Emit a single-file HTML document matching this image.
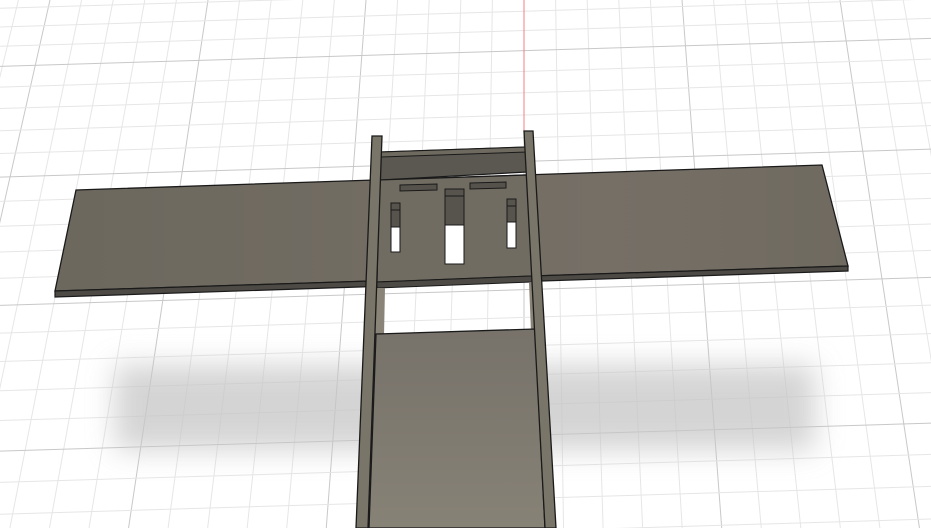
<!DOCTYPE html>
<html><head><meta charset="utf-8"><style>html,body{margin:0;padding:0;background:#fff;width:931px;height:528px;overflow:hidden}svg{display:block}</style></head>
<body>
<svg id="s" width="931" height="528" viewBox="0 0 931 528" xmlns="http://www.w3.org/2000/svg">
<defs>
<filter id="bl" x="-20%" y="-50%" width="140%" height="200%"><feGaussianBlur stdDeviation="14"/></filter>
<linearGradient id="lp" x1="0" y1="0" x2="0" y2="1"><stop offset="0" stop-color="#77726a"/><stop offset="1" stop-color="#878276"/></linearGradient>
<linearGradient id="wg" x1="0" y1="0" x2="1" y2="0"><stop offset="0" stop-color="#6c685e"/><stop offset="0.7" stop-color="#766f66"/><stop offset="1" stop-color="#6f6a60"/></linearGradient>
</defs>
<g id="grid"></g>
<line x1="524" y1="0" x2="524" y2="134" stroke="#f08080" stroke-width="1"/>
<rect x="115" y="365" width="700" height="85" fill="#c6c6c6" filter="url(#bl)" opacity="0.75"/>
<polygon points="76,190 822,165 848,266 55,291" fill="url(#wg)" stroke="#1a1a1a" stroke-width="1.3"/>
<polygon points="55,291 848,266 848,271 55,297" fill="#4d4a45" stroke="#1a1a1a" stroke-width="1.2"/>
<polygon points="380,152 527,147 527,172 380,180" fill="#5b5852" stroke="#1a1a1a" stroke-width="1.2"/>
<polygon points="380,152 527,147 527,152 380,157" fill="#6f6a60" stroke="#1a1a1a" stroke-width="1"/>
<polygon points="379,180 528,175 532,276 377,282" fill="#716c62" stroke="#1a1a1a" stroke-width="1.2"/>
<polygon points="377,282 532,276 532,282 377,288" fill="#4d4a45" stroke="#1a1a1a" stroke-width="1"/>
<polygon points="400,185 437,184 437,190 400,191" fill="#55524c" stroke="#1a1a1a"/>
<polygon points="470,183 506,182 506,188 470,189" fill="#55524c" stroke="#1a1a1a"/>
<rect x="391" y="203" width="9" height="49" fill="#fff" stroke="#1a1a1a"/>
<rect x="391" y="203" width="9" height="24" fill="#57544e" stroke="#1a1a1a"/>
<line x1="391" y1="210" x2="400" y2="210" stroke="#1a1a1a"/>
<rect x="445" y="189" width="19" height="75" fill="#fff" stroke="#1a1a1a"/>
<rect x="445" y="189" width="19" height="36" fill="#57544e" stroke="#1a1a1a"/>
<line x1="445" y1="196" x2="464" y2="196" stroke="#1a1a1a"/>
<rect x="507" y="199" width="9" height="49" fill="#fff" stroke="#1a1a1a"/>
<rect x="507" y="199" width="9" height="23" fill="#57544e" stroke="#1a1a1a"/>
<line x1="507" y1="206" x2="516" y2="206" stroke="#1a1a1a"/>
<polygon points="376,288 385,288 380,528 370,528" fill="#8a8478"/>
<polygon points="529,283 535,283 545,528 539,528" fill="#8a8478"/>
<polygon points="376,334 535,329 545,528 369,528" fill="url(#lp)" stroke="#1a1a1a" stroke-width="1.3"/>
<polygon points="372,136 382,136 368,528 356,528" fill="#7a7569" stroke="#1a1a1a" stroke-width="1.3"/>
<polygon points="524,131 533,131 556,528 545,528" fill="#7a7569" stroke="#1a1a1a" stroke-width="1.3"/>
</svg>
<script>
(function(){
var g=document.getElementById('grid'),out='';
function L(x1,y1,x2,y2,c){out+='<line x1="'+x1+'" y1="'+y1+'" x2="'+x2+'" y2="'+y2+'" stroke="'+c+'" stroke-width="1"/>';}
var vx=524,vy=-2100;
for(var i=-30;i<=30;i++){var x0=vx+i*31.6;var x1=vx+(x0-vx)*(528-vy)/(0-vy);
 L(x0,0,x1,528,(i%5==0)?'#c8c8c8':'#e6e6e6');}
for(var n=-1;n<30;n++){var y=13+19*n+0.35*n*n;if(y>540)break;
 L(0,y+0.03*465,931,y-0.03*466,(n%5==2)?'#c8c8c8':'#e6e6e6');}
g.innerHTML=out;
})();
</script>
</body></html>
